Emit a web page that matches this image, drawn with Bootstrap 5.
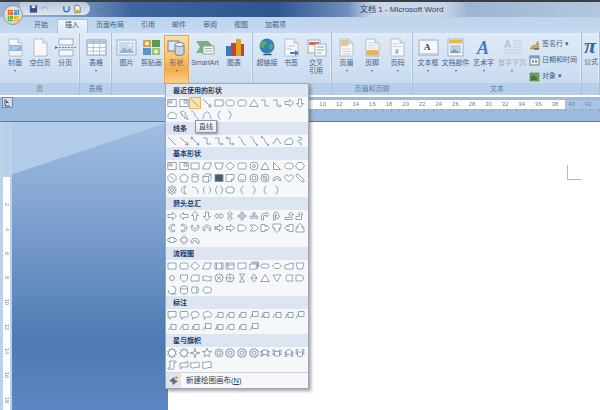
<!DOCTYPE html>
<html lang="zh-CN">
<head>
<meta charset="UTF-8">
<meta name="viewport" content="width=device-width, initial-scale=1.0">
<link href="https://cdn.jsdelivr.net/npm/bootstrap@5.3.3/dist/css/bootstrap.min.css" rel="stylesheet">
<script src="https://cdn.jsdelivr.net/npm/bootstrap@5.3.3/dist/js/bootstrap.bundle.min.js"></script>
<title>文档 1 - Microsoft Word</title>
<style>
  html, body { margin: 0; height: 410px; overflow: hidden; }
  body { font-family: "Liberation Sans", "Noto Sans CJK SC", sans-serif; font-size: 7px; line-height: 1.2; color: #46607f; background: #fff; }
  .word-app { position: relative; width: 600px; height: 410px; overflow: hidden; filter: blur(.35px); }

  .title-bar { height: 17px; border-top: 2px solid #3b3d42; background: linear-gradient(90deg, #9db8d8 0, #7d9cc5 12%, #3f659f 22%, #2f5590 46%, #6f90bc 58%, #c8d8ea 62%, #c6d6e8 74%, #9db5d2 78%, #b3c7de 100%); }
  .office-orb { position: absolute; left: 3px; top: 5px; width: 20px; height: 20px; border-radius: 50%; background: radial-gradient(circle at 50% 35%, #f7f2e2 0, #e3d9c0 60%, #b9c5d4 100%); border: 1px solid #8d9db2; }
  .qat { margin-left: 20px; height: 13px; width: 70px; padding-left: 8.5px; gap: 2px; background: linear-gradient(#b6c7dc, #dde6f0); border-radius: 0 8px 8px 0; }
  .qat-item { width: 9px; height: 10px; flex: none; }
  .doc-title { left: 360px; top: 5px; font-size: 8px; color: #33445c; white-space: nowrap; }

  .tab-row { height: 16px; padding-left: 25.5px; background: linear-gradient(#bdd3ec, #c6daf0); }
  .tab-item { height: 14px; padding: 2px 8.5px 0; color: #3f5f88; white-space: nowrap; }
  .tab-item.is-on { background: linear-gradient(#f0f6fc, #dbe8f6); border: 1px solid #a6bfdc; border-bottom: 0; border-radius: 2px 2px 0 0; padding: 1px 7.5px 0; color: #2f4562; }

  .ribbon { height: 62px; background: #d3e2f3; }
  .rb-group { height: 62px; border-right: 1px solid #a9c0db; box-shadow: inset -1px 0 0 #e4eef9; background: linear-gradient(#e0ebf7, #cfdff2 60%, #c2d6ed); }
  .rb-body { height: 50px; padding: 2px 2px 0; }
  .rb-label { height: 12px; line-height: 12px; text-align: center; color: #5f80ab; background: #b8cfe9; }
  .rb-btn { flex: none; padding-top: 3px; height: 49px; white-space: nowrap; }
  .rb-btn svg { width: 21px; height: 19px; display: block; margin-bottom: 2px; }
  .rb-btn.is-hot { background: linear-gradient(#fbe3a4, #f8c56c 45%, #f5a94a 70%, #fbd58a); box-shadow: inset 0 0 0 1px #dfa95a; }
  .rb-btn.is-off { color: #a0aebf; }
  .rb-drop { width: 0; height: 0; border: 1.5px solid transparent; border-top: 2px solid #4b6485; margin-top: 3px; }
  .rb-stack { padding: 4px 0 0 2px; gap: 5px; white-space: nowrap; }
  .rb-stack svg { width: 11px; height: 11px; margin-right: 2px; }
  .rb-stack > div { height: 11px; }
  .pi-glyph { font-family: "Liberation Serif", serif; font-size: 22px; font-weight: 700; font-style: italic; color: #2a69b0; line-height: 25px; height: 25px; margin-top: -5px; }

  .ruler-strip { height: 25px; background: #9dbbdf; border-bottom: 1px solid #66768c; }
  .corner-btn { width: 11px; height: 11px; margin: 2px 0 0 2px; background: #cfdef0; border: 1px solid #6d8cb3; }
  .corner-btn svg { display: block; width: 9px; height: 9px; }
  .h-ruler { position: absolute; left: 168px; right: 0; top: 100px; height: 9px; padding-left: 80px; display: flex; overflow: hidden; background: linear-gradient(90deg, #fff 0, #fff 397px, #a9c3e3 397px); color: #6d7f96; font-size: 6px; line-height: 9px; }
  .h-ruler span { flex: none; width: 16.6px; text-align: center; }
  .h-ticks { position: absolute; left: 168px; right: 0; top: 109px; height: 2px; background: repeating-linear-gradient(90deg, transparent 0, transparent 7.3px, #6d7f96 7.3px, #6d7f96 8.3px); opacity: .5; }

  .workspace { height: 290px; }
  .v-ruler { width: 12px; background: #bcd2ea; padding-left: 3px; }
  .v-scale { width: 7px; height: 290px; background: linear-gradient(#b9cfe8 0, #b9cfe8 55px, #fff 55px); color: #6d7f96; font-size: 5.5px; padding-top: 70.5px; overflow: hidden; }
  .v-scale span { display: block; height: 24.4px; text-align: center; line-height: 7px; writing-mode: vertical-rl; }
  .desk { width: 156px; background: linear-gradient(to bottom right, #b3cbea 50%, transparent 50.5%) top / 100% 52px no-repeat, linear-gradient(#a3bee2 0, #88a9d4 24%, #4e7ab2 76%, #5c88c3 100%); }
  .paper { flex: 1; background: #fff; padding: 43px 0 0 399px; }
  .crop-mark { width: 15px; height: 15px; border-left: 1px solid #b9b9b9; border-bottom: 1px solid #b9b9b9; }

  .shape-menu { position: absolute; left: 165px; top: 83px; width: 144px; height: 306px; background: #f6f7f9; border: 1px solid #a3a8ae; box-shadow: 2px 2px 3px rgba(40, 50, 70, .45); }
  .menu-band { height: 13px; line-height: 13px; padding-left: 7px; background: #dde6f0; font-weight: 700; color: #1f3a6b; }
  .menu-grid { display: flex; flex-wrap: wrap; padding-bottom: .7px; }
  .shape-cell { width: 11.7px; height: 12px; display: flex; align-items: center; justify-content: center; }
  .shape-cell svg { width: 10px; height: 10px; }
  .shape-cell.is-hot { background: #fbe5a2; box-shadow: inset 0 0 0 1px #e3b765; }
  .menu-foot { height: 16px; border-top: 1px solid #cfd5dc; background: #f6f7f9; color: #2b3a50; }
  .menu-foot-ico { width: 15px; height: 15px; background: #dfe4ea; }
  .menu-foot-ico svg { width: 11px; height: 11px; }
  .menu-foot-txt { padding-left: 5px; font-size: 7.5px; }
  .tip-box { position: absolute; left: 195px; top: 120px; width: 22px; height: 13px; line-height: 11px; text-align: center; background: linear-gradient(#f9fafc, #dfe4ec); border: 1px solid #8f97a2; color: #3b4a5e; box-shadow: 1px 1px 2px rgba(0, 0, 0, .35); }
</style>
</head>
<body>
<div class="word-app">
  <div class="title-bar d-flex align-items-start">
    <div class="qat d-flex align-items-center" id="qat"></div>
  </div>
  <div class="doc-title position-absolute">文档 1 - Microsoft Word</div>

  <div class="tab-row d-flex align-items-end" id="tabs"></div>
  <div class="ribbon d-flex" id="ribbon"></div>

  <div class="ruler-strip">
    <div class="corner-btn">
      <svg viewBox="0 0 9 9"><path d="M2 1v7h5" fill="none" stroke="#3f5068"/><path d="M3 2l3 3H3z" fill="#3f5068"/></svg>
    </div>
  </div>

  <div class="workspace d-flex">
    <div class="v-ruler"><div class="v-scale" id="vscale"></div></div>
    <div class="desk"></div>
    <div class="paper"><div class="crop-mark"></div></div>
  </div>

  <div class="h-ruler" id="hruler"></div>
  <div class="h-ticks"></div>

  <div class="office-orb d-flex align-items-center justify-content-center">
    <svg width="13" height="13" viewBox="0 0 15 15">
      <rect x="1" y="1" width="6" height="6" fill="#e2672c"/><rect x="8" y="1" width="6" height="6" fill="#4f8fd0"/>
      <rect x="1" y="8" width="6" height="6" fill="#6fae3d"/><rect x="8" y="8" width="6" height="6" fill="#e8b32f"/>
      <path d="M3 3h9v9H3z" fill="none" stroke="#fff" stroke-width=".8" opacity=".7"/>
    </svg>
  </div>

  <div class="shape-menu d-flex flex-column" id="menu"></div>
  <div class="tip-box">直线</div>
</div>

<script>
  // ---- title bar / tabs / rulers
  const qatIcons = [
    '<rect x="1" y="1" width="8" height="8" fill="#3a4f86"/><rect x="3" y="1" width="4" height="3" fill="#dfe6f2"/>',
    '<path d="M2 6a3 3 0 0 1 6-1" fill="none" stroke="#a9b4c2" stroke-width="1.5"/>',
    '',
    '<path d="M2 2v3a3 3 0 0 0 6 0V2" fill="none" stroke="#3f79c4" stroke-width="1.6"/>',
    '<path d="M2 1h4l2 2v6H2z" fill="#f4f4ee" stroke="#777"/><path d="M3 6h4v3H3z" fill="#d9a441"/>',
    '',
    '<path d="M3 4h5L5.5 7z" fill="#66788f"/>'
  ];
  document.getElementById("qat").innerHTML = qatIcons
    .map((p) => `<svg class="qat-item" viewBox="0 0 10 10">${p}</svg>`).join("");

  document.getElementById("tabs").innerHTML = ["开始", "插入", "页面布局", "引用", "邮件", "审阅", "视图", "加载项"]
    .map((t) => `<div class="tab-item${t === "插入" ? " is-on" : ""}">${t}</div>`).join("");

  let hr = "";
  for (let n = 2; n <= 42; n += 2) hr += `<span>${n}</span>`;
  document.getElementById("hruler").innerHTML = hr;

  let vr = "";
  for (let n = 2; n <= 18; n += 2) vr += `<span>${n}</span>`;
  document.getElementById("vscale").innerHTML = vr;

  // ---- ribbon icons, viewBox 21x19
  const page = (inner) => `<path d="M4 1h9l4 4v13H4z" fill="#f7f8fb" stroke="#a3b1c3" stroke-width=".8"/><path d="M13 1v4h4" fill="#dfe5ee" stroke="#a3b1c3" stroke-width=".8"/>${inner || ""}`;
  const I = {
    cover: page('<rect x="4.5" y="7" width="12" height="6" fill="#8fb2da"/><path d="M6 9h8M6 11h6M6 15h9" stroke="#dbe7f5" stroke-width=".8"/>'),
    blank: page(),
    brk: '<rect x="4" y="1" width="14" height="6" fill="#f6f7fa" stroke="#9dacbe"/><rect x="4" y="12" width="14" height="6" fill="#f6f7fa" stroke="#9dacbe"/><path d="M1 9.5h20" stroke="#6f86a6" stroke-dasharray="2 1"/><path d="M0 8l3 1.5L0 11z" fill="#3f6fae"/>',
    table: '<rect x="1" y="2" width="19" height="15" fill="#fbfcfe" stroke="#8a9db5"/><rect x="1" y="2" width="19" height="4" fill="#b3c7de"/><path d="M7.3 2v15M13.6 2v15M1 9.5h19M1 13.2h19" stroke="#a5b7cc" stroke-width=".8"/>',
    pic: '<rect x="1" y="2" width="19" height="15" fill="#eef3f9" stroke="#9bacc2"/><rect x="3" y="4" width="15" height="11" fill="#c6dcf0"/><path d="M3 15l5-6 3 3 3-2 4 5z" fill="#9ab2cc"/><circle cx="14" cy="7" r="1.5" fill="#f7f3d6"/>',
    clip: '<rect x="2" y="2" width="8" height="7" fill="#d2a04a"/><rect x="11" y="2" width="8" height="7" fill="#5b9a57"/><rect x="2" y="10" width="8" height="7" fill="#5c93c8"/><rect x="11" y="10" width="8" height="7" fill="#9cc46a"/><circle cx="6" cy="5.5" r="2" fill="#f3efe0"/><circle cx="15" cy="13.5" r="2" fill="#f3efe0"/>',
    shp: '<rect x="2" y="3" width="11" height="10" fill="#dfe8f2" stroke="#6f8299"/><path d="M9 6.5v9a4.5 2 0 0 0 9 0v-9" fill="#c6d4e3" stroke="#6f8299"/><ellipse cx="13.5" cy="6.5" rx="4.5" ry="2" fill="#f1f5f9" stroke="#6f8299"/>',
    art: '<path d="M1 3h12l6 6-6 6H1l4-6z" fill="#7ab07d"/><rect x="8" y="8" width="11" height="8" fill="#f4f6f1" stroke="#8fa892"/><path d="M10 10.5h7M10 13h7" stroke="#9ab39d"/>',
    chart: '<rect x="2" y="8" width="5" height="10" fill="#3f78bd"/><rect x="7" y="5" width="5" height="13" fill="#c8432f"/><rect x="12" y="1" width="5" height="17" fill="#e0a12f"/><rect x="17" y="6" width="3" height="12" fill="#c8432f"/>',
    link: '<circle cx="10" cy="8" r="7.5" fill="#2f7fc4"/><path d="M4 4c3-2 6-1 6 1s-3 2-3 4-3 1-4-1zM12 6c3-1 5 0 4 3s-3 3-4 1z" fill="#63a94b"/><path d="M7 16.5h3M11 16.5h3" stroke="#44505f" stroke-width="1.6" stroke-linecap="round"/>',
    mark: page('<path d="M6 8h8M6 11h5" stroke="#a5b3c4" stroke-width=".8"/><path d="M9 14h5v-2l4 3-4 3v-2H9z" fill="#3f7fc4"/>'),
    xref: '<rect x="2" y="2" width="12" height="13" fill="#f6f6f4" stroke="#9dacbe"/><rect x="3" y="4" width="10" height="3" fill="#cf6a5a"/><rect x="9" y="6" width="11" height="12" fill="#fbfbf8" stroke="#9dacbe"/><path d="M11 9h7M11 12h7M11 15h5" stroke="#8c98a7" stroke-width=".9"/>',
    head: page('<rect x="4.5" y="2" width="8" height="6" fill="#dcc69a"/><path d="M6 11h9M6 13.5h9M6 16h9" stroke="#c3ccd7" stroke-width=".8"/>'),
    foot: page('<path d="M6 5h6M6 7.5h9M6 10h9" stroke="#c3ccd7" stroke-width=".8"/><rect x="4.5" y="12" width="12" height="5.5" fill="#e6b35a"/>'),
    num: page('<path d="M6 6h6M6 8.5h9" stroke="#c3ccd7" stroke-width=".8"/><text x="8" y="16" font-family="Liberation Sans" font-size="6.5" font-weight="700" fill="#7a899c">#</text>'),
    tbox: '<rect x="1" y="2" width="19" height="15" fill="#f4f7fb" stroke="#9dacbe"/><rect x="2" y="15" width="17" height="2" fill="#c6d2e0"/><text x="6" y="12" font-family="Liberation Serif" font-size="9" font-weight="700" fill="#3a404c">A</text>',
    part: '<rect x="3" y="1" width="15" height="17" fill="#f6f7f4" stroke="#a3b1c3"/><rect x="4" y="2" width="13" height="3.5" fill="#e6b94f"/><rect x="5" y="7" width="11" height="8" fill="#b7cfe3"/><path d="M5 15l4-4 3 2 4 2z" fill="#7f9ab4"/>',
    wart: '<text x="4" y="16" font-family="Liberation Serif" font-size="18" font-weight="700" font-style="italic" fill="#3f7bc4">A</text>',
    cap: '<text x="2" y="10" font-family="Liberation Sans" font-size="10" font-weight="700" fill="#b7c2d0">A</text><path d="M11 3h9M11 6h9M11 9h9M2 12h18M2 15h18" stroke="#c3ccd7"/>',
    sign: '<path d="M1 10l3-4 2 1 3-5 1 8z" fill="#c9a85b" stroke="#8c7a55" stroke-width=".5"/><path d="M5 10h5" stroke="#445"/>',
    date: '<rect x="1" y="1" width="9" height="9" fill="#f4f6fa" stroke="#5f7694"/><rect x="1" y="1" width="9" height="2.5" fill="#7f9cc2"/><path d="M4 5v3M7 5v3" stroke="#33435a"/>',
    obj: '<rect x="1" y="2" width="9" height="8" fill="#6fa35f" stroke="#51784a" stroke-width=".6"/><path d="M3 9V5M5 9V4M7 9V6" stroke="#22401f"/>'
  };

  // label, width, icon; lines split two-row labels; d = drop arrow
  const groups = [
    { name: "页", w: 80, items: [["封面", 26, "cover", 1], ["空白页", 24, "blank"], ["分页", 26, "brk"]] },
    { name: "表格", w: 32, items: [["表格", 28, "table", 1]] },
    { name: "", w: 141, items: [["图片", 25, "pic"], ["剪贴画", 25, "clip"], ["形状", 25, "shp", 1, "hot"], ["SmartArt", 32, "art"], ["图表", 26, "chart"]] },
    { name: "链接", w: 79, items: [["超链接", 24, "link"], ["书签", 24, "mark"], ["交叉<br>引用", 26, "xref"]] },
    { name: "页眉和页脚", w: 81, items: [["页眉", 25, "head", 1], ["页脚", 26, "foot", 1], ["页码", 25, "num", 1]] },
    { name: "文本", w: 169, items: [["文本框", 26, "tbox", 1], ["文档部件", 29, "part", 1], ["艺术字", 27, "wart", 1], ["首字下沉", 30, "cap", 1, "off"]], stack: [["签名行 ▾", "sign"], ["日期和时间", "date"], ["对象 ▾", "obj"]] },
    { name: "", w: 18, pi: true, items: [] }
  ];

  const ribbonHtml = groups.map((g) => {
    const btns = g.items.map(([label, w, icon, drop, state]) => `
      <div class="rb-btn d-flex flex-column align-items-center text-center${state ? " is-" + state : ""}" style="width:${w}px">
        <svg viewBox="0 0 21 19">${I[icon]}</svg>
        <div>${label}</div>
        ${drop ? '<div class="rb-drop"></div>' : ""}
      </div>`).join("");
    const stack = g.stack ? `<div class="rb-stack d-flex flex-column">${g.stack.map(([t, ic]) =>
      `<div class="d-flex align-items-center"><svg viewBox="0 0 11 11">${I[ic]}</svg>${t}</div>`).join("")}</div>` : "";
    const pi = g.pi ? `<div class="rb-btn d-flex flex-column" style="width:30px"><div class="pi-glyph">π</div><div>公式</div></div>` : "";
    return `<div class="rb-group flex-shrink-0" style="width:${g.w}px">
      <div class="rb-body d-flex">${btns}${stack}${pi}</div>
      <div class="rb-label">${g.name}</div>
    </div>`;
  }).join("");
  document.getElementById("ribbon").innerHTML = ribbonHtml;

  // ---- gallery shapes, viewBox 10x10
  const star = (n, R, r) => {
    let d = "";
    for (let i = 0; i < n * 2; i++) {
      const rad = i % 2 ? r : R, a = Math.PI * i / n - Math.PI / 2;
      d += (i ? "L" : "M") + (5 + rad * Math.cos(a)).toFixed(2) + " " + (5 + rad * Math.sin(a)).toFixed(2);
    }
    return d + "z";
  };
  const S = {
    tb: "M.8 1.5h8.4v7H.8zM2 3h3v2H2z", tb2: "M.8 1.5h8.4v7H.8zM5 2.6h3v2.5H5z",
    line: "M1 1L9 9", arrow: "M1 1L9 9M9 9L8.5 6M9 9L6 8.5", dbl: "M1 1L9 9M9 9L8.5 6.5M9 9L6.5 8.5M1 1L1.5 3.5M1 1L3.5 1.5",
    rect: "M1 2h8v6H1z", rrect: "M2.5 2h5A1.5 1.5 0 0 1 9 3.5v3A1.5 1.5 0 0 1 7.5 8h-5A1.5 1.5 0 0 1 1 6.5v-3A1.5 1.5 0 0 1 2.5 2z",
    oval: "M.8 5a4.2 3 0 1 0 8.4 0a4.2 3 0 1 0-8.4 0z", circ: "M1 5a4 4 0 1 0 8 0a4 4 0 1 0-8 0z", small: "M2.5 5a2.5 2.5 0 1 0 5 0a2.5 2.5 0 1 0-5 0z",
    dotc: "M1 5a4 4 0 1 0 8 0a4 4 0 1 0-8 0zM3.5 5a1.5 1.5 0 1 0 3 0a1.5 1.5 0 1 0-3 0z",
    tri: "M5 1.5L9.2 8.5H.8z", rtri: "M1.5 1.5V8.5H8.5z", para: "M3 2h6.5L7 8H.5z", trap: "M.8 2h8.4L7.5 8h-5z", dia: "M5 1L9.5 5 5 9 .5 5z",
    pent: "M5 1l4.3 3.2L7.6 9H2.4L.7 4.2z", hex: "M3 1.5h4L9.5 5 7 8.5H3L.5 5z", oct: "M3.2 1h3.6L9 3.2v3.6L6.8 9H3.2L1 6.8V3.2z",
    elbow: "M1 2H5V8H9", elbowa: "M1 2H5V8H9M9 8L7.5 6.8M9 8L7.5 9.2", elbowd: "M1 2H5V8H9M9 8L7.5 6.8M9 8L7.5 9.2M1 2L2.5.8M1 2L2.5 3.2",
    curve: "M1 1C6 1 4 9 9 9", curvea: "M1 1C6 1 4 9 9 9M9 9L7.3 7.8M9 9L7.3 9.8", curved: "M1 1C6 1 4 9 9 9M9 9L7.3 7.8M9 9L7.3 9.8M1 1L2.7 .2M1 1L2.7 2.2",
    peak: "M1 8L5 2 9 8", arcu: "M1 9C2 4 3 2 5 2S8 4 9 9", scrib: "M3 1C8 1 8 4 5 4S2 6 5 7 7 9 5 9",
    cloud: "M2.5 8.5A2 2 0 0 1 1.5 5 2 2 0 0 1 4 3 2.3 2.3 0 0 1 8 4 2.2 2.2 0 0 1 8 8.5z", cloudf: "M1 8.5L1 5 4 3 7 2 9 5 8 8.5z",
    bolt: "M4 .8L7 3.5 5.8 4.3 8.5 7 7.5 7.5 9.3 9.5 5 7.8 6 7 2.5 5 3.5 4.3 1 2.5z",
    lbrace: "M6.5 1C4.5 1 5 4.5 3.5 5 5 5.5 4.5 9 6.5 9", rbrace: "M3.5 1C5.5 1 5 4.5 6.5 5 5 5.5 5.5 9 3.5 9",
    lbrack: "M6.5 1C4.5 2 4 3.5 4 5s.5 3 2.5 4", rbrack: "M3.5 1C5.5 2 6 3.5 6 5s-.5 3-2.5 4",
    dec: "M3.5 1h3L9 3.5v3L6.5 9h-3L1 6.5v-3zM3 3l4 4", can: "M2 2.5v5a3 1.5 0 0 0 6 0v-5M2 2.5a3 1.5 0 0 0 6 0a3 1.5 0 0 0-6 0z",
    cube: "M1 3.5h5.5V9H1zM1 3.5L3.5 1H9L6.5 3.5M9 1v5.5L6.5 9", bevel: "M1 1.5h8v7H1z", fold: "M1 1.5h8V6L6.5 8.5H1zM6.5 8.5V6H9",
    smile: "M1 5a4 4 0 1 0 8 0a4 4 0 1 0-8 0zM3.5 3.8v.4M6.5 3.8v.4M3 6.2c1 1.2 3 1.2 4 0", donut: "M1 5a4 4 0 1 0 8 0a4 4 0 1 0-8 0zM3 5a2 2 0 1 0 4 0a2 2 0 1 0-4 0z",
    nosym: "M1 5a4 4 0 1 0 8 0a4 4 0 1 0-8 0zM3 5a2 2 0 1 0 4 0a2 2 0 1 0-4 0zM2.2 2.2L7.8 7.8", barc: "M1 7.5a4 4 0 0 1 8 0H7a2 2 0 0 0-4 0z",
    heart: "M5 8.8C1 6 .5 4.5 1 3S4 1.5 5 3.5C6 1.5 8.5 1.5 9 3S9 6 5 8.8z", pen: "M1.5 1.5L3 1 9 7 8.8 9 7 8.8 1 3z",
    sun: star(8, 4.5, 2.8) + "M3.5 5a1.5 1.5 0 1 0 3 0a1.5 1.5 0 1 0-3 0z", moon: "M7 1C3.5 1.5 2.5 3.5 2.5 5s1 3.5 4.5 4C5.5 7.5 5 6.3 5 5s.5-2.5 2-4z",
    arc: "M2 2C6 2 8 4.5 8 8.5", dbrack: "M3 1.5C1 3 1 7 3 8.5M7 1.5C9 3 9 7 7 8.5", dbrace: "M3.5 1C2 1 2.5 4.5 1 5 2.5 5.5 2 9 3.5 9M6.5 1C8 1 7.5 4.5 9 5 7.5 5.5 8 9 6.5 9",
    plaq: "M2.5 2h5A1.5 1.5 0 0 0 9 3.5v3A1.5 1.5 0 0 0 7.5 8h-5A1.5 1.5 0 0 0 1 6.5v-3A1.5 1.5 0 0 0 2.5 2z",
    rarrow: "M1 3.5H5.5V1.5L9.5 5 5.5 8.5V6.5H1z", larrow: "M9 3.5H4.5V1.5L.5 5 4.5 8.5V6.5H9z", uarrow: "M3.5 9V4.5H1.5L5 .5 8.5 4.5H6.5V9z", darr: "M3.5 1V5.5H1.5L5 9.5 8.5 5.5H6.5V1z",
    lr: "M.5 5L3 2.5V4H7V2.5L9.5 5 7 7.5V6H3V7.5z", ud: "M5 .5L7.5 3H6V7H7.5L5 9.5 2.5 7H4V3H2.5z",
    quad: "M5 .5L6.5 2.5H5.7V4.3H7.5V3.5L9.5 5 7.5 6.5V5.7H5.7V7.5H6.5L5 9.5 3.5 7.5H4.3V5.7H2.5V6.5L.5 5 2.5 3.5V4.3H4.3V2.5H3.5z",
    lru: "M5 1L6.5 3H5.7V5.5H7.5V4.5L9.5 6.2 7.5 8V7H2.5V8L.5 6.2 2.5 4.5V5.5H4.3V3H3.5z",
    bent: "M1.5 9V4.5A2 2 0 0 1 3.5 2.5H6.5V1L9 3.5 6.5 6V4.5H3.5V9z", uturn: "M1.5 9V3.5A2.5 2.5 0 0 1 6.5 3.5V5H8L5.5 8 3 5H4.5V3.5A1 1 0 0 0 3.3 3.5V9z",
    corner: "M1 6.5H6V3.5H4.5L7 1 9.5 3.5H8V8.5H1z", bentup: "M1 5.5H4.5V3.5H3L5.5 1 8 3.5H6.5V8.5H1z",
    curl: "M7 1C4 1 2 3 2 5S4 9 7 9L8 7.5C6 7.5 4 7 4 5S6 2.5 8 2.5z", curu: "M1 3C1 6 3 8 5 8S9 6 9 3L7.5 2C7.5 4 7 6 5 6S2.5 4 2.5 2z", curd: "M1 7C1 4 3 2 5 2S9 4 9 7L7.5 8C7.5 6 7 4 5 4S2.5 6 2.5 8z",
    stripe: "M1 3.5h1v3H1zM3 3.5h2.5V1.5L9.5 5 5.5 8.5V6.5H3z", notch: "M1 3.5H5.5V1.5L9.5 5 5.5 8.5V6.5H1L2.5 5z", pentag: "M1 2H6.5L9.5 5 6.5 8H1z", chev: "M1 2H6L9.5 5 6 8H1L4 5z",
    rcall: "M1 1.5H5V3.5H6.5V2L9.5 5 6.5 8V6.5H5V8.5H1z", dcall: "M1 1H9V5H7V6.5H8.2L5 9.5 1.8 6.5H3V5H1z", lcall: "M9 1.5H5V3.5H3.5V2L.5 5 3.5 8V6.5H5V8.5H9z", ucall: "M1 9H9V5H7V3.5H8.2L5 .5 1.8 3.5H3V5H1z",
    lrcall: "M3 2.5H7V4H8V3L9.8 5 8 7V6H7V7.5H3V6H2V7L.2 5 2 3V4H3z", quadc: "M3 3H4V2H3.5L5 .5 6.5 2H6V3H7V4H8V3.5L9.5 5 8 6.5V6H7V7H6V8H6.5L5 9.5 3.5 8H4V7H3V6H2V6.5L.5 5 2 3.5V4H3z", circa: "M1 8A4 4 0 0 1 9 7H9.8L8 9 6 7H7A2 2 0 0 0 3 8z",
    pred: "M1 2h8v6H1zM2.5 2v6M7.5 2v6", intern: "M1 2h8v6H1zM3 2v6M1 4h8", doc: "M1 2h8v5.5C6.5 6 4 9.5 1 7.5z", mdoc: "M3 1h6.5v5M2 2h6.5v5.5M.8 3h6.5v5C5 7 3 9.5.8 8z",
    term: "M3 3h4a2 2 0 0 1 0 4H3a2 2 0 0 1 0-4z", prep: "M3 2.5h4L9.5 5 7 7.5H3L.5 5z", mani: "M1 4L9 2V8H1z", mano: "M1 2H9L7.5 8H2.5z",
    offp: "M1.5 2h7v4L5 8.8 1.5 6z", card: "M3 2h6v6H1V4z", tape: "M1 3c2 1.5 3.5-1 4 0s3 1.5 4 0v5C7 6.5 5.5 9 5 8S2 6.5 1 8z",
    sumj: "M1 5a4 4 0 1 0 8 0a4 4 0 1 0-8 0zM2.2 2.2L7.8 7.8M7.8 2.2L2.2 7.8", orj: "M1 5a4 4 0 1 0 8 0a4 4 0 1 0-8 0zM5 1v8M1 5h8",
    coll: "M2.5 1h5L2.5 9h5z", sort: "M5 1L8 5 5 9 2 5zM2 5h6", merg: "M1 2h8L5 8.5z", stor: "M3 2H9C7.8 3.5 7.8 6.5 9 8H3C1.8 6.5 1.8 3.5 3 2z", delay: "M1 2H5.5a3 3 0 0 1 0 6H1z", disp: "M3 2H6.5a3 3 0 0 1 0 6H3L.8 5z",
    seq: "M1 5a4 4 0 1 0 4-4M5 9H9.5", mag: "M1.5 2.5v5a3.5 1.5 0 0 0 7 0v-5M1.5 2.5a3.5 1.5 0 0 0 7 0a3.5 1.5 0 0 0-7 0z", direct: "M2.5 2h5C8.8 3.5 8.8 6.5 7.5 8h-5C1.2 6.5 1.2 3.5 2.5 2zM7.5 2C6.2 3.5 6.2 6.5 7.5 8",
    c1: "M1 1.5h8V7H4.5L2.5 9.3 3 7H1z", c2: "M2 1.5h6a1 1 0 0 1 1 1V6a1 1 0 0 1-1 1H4.5L2.8 9.3 3 7H2a1 1 0 0 1-1-1V2.5a1 1 0 0 1 1-1z",
    c3: "M1 4.5a4 3 0 0 1 8 0a4 3 0 0 1-5 3L2.5 9.3 2.8 7A4 3 0 0 1 1 4.5z", c4: "M2 7A2 2 0 0 1 1.5 4 2 2 0 0 1 4 2 2.3 2.3 0 0 1 8 3 2 2 0 0 1 8 7H4.5L2 9.3 3 7z",
    l1: "M4 2.5h5v5H4zM4 5L1 8", l2: "M4 2.5h5v5H4zM4 4.5H2.5L1 8", l3: "M4 2.5h5v5H4zM4 4.5H2.5V7L1 8", l4: "M3.5 1.5h5.5v5H3.5zM1 8.5L3.5 4", l5: "M4 2.5h5v5H4zM3 2.5v5M3 5L1 8",
    e1: star(10, 4.8, 3), e2: star(8, 4.8, 2.8), s4: star(4, 4.8, 1.4), s5: star(5, 4.8, 2), s8: star(8, 4.5, 3.2) + "M3 5a2 2 0 1 0 4 0a2 2 0 1 0-4 0z", s16: star(16, 4.6, 3.6) + "M3 5a2 2 0 1 0 4 0a2 2 0 1 0-4 0z",
    rib1: "M2.5 2h5v4.5h-5zM2.5 3.5H.5L1.5 5.5 .5 8H3V6.5M7.5 3.5H9.5L8.5 5.5 9.5 8H7V6.5", rib2: "M2.5 3.5h5V8h-5zM2.5 6.5H.5L1.5 4.5 .5 2H3V3.5M7.5 6.5H9.5L8.5 4.5 9.5 2H7V3.5",
    crib1: "M2.5 2.5C4 1.5 6 1.5 7.5 2.5V7C6 6 4 6 2.5 7zM2.5 4H.8L1.5 6 1 8.5 3.5 8M7.5 4H9.2L8.5 6 9 8.5 6.5 8", crib2: "M2.5 3.5C4 4.5 6 4.5 7.5 3.5V8C6 9 4 9 2.5 8zM2.5 6H.8L1.5 4 1 1.5 3.5 2M7.5 6H9.2L8.5 4 9 1.5 6.5 2",
    vscr: "M3 1h5.5c1 0 1 1.5 0 1.5H7V8c0 1-1 1.2-1.5 1.2H1.5C.5 9.2.5 7.8 1.5 7.8H3zM3 1c-.8 0-.8 1 0 1.2", hscr: "M1 3V8c0 1.2 1.5 1.2 1.5 0V7H9V2c0-1-1.5-1-1.5 0v1z",
    wave: "M.8 2.5c2.5 1.8 5.5-1.5 8.4 0v5c-3-1.5-6 1.8-8.4 0z", dwave: "M.8 2c2.5 2 5.5-2 8.4 0v6c-3-2-6 2-8.4 0z"
  };
  const darkFill = { bevel: "#4a5b73" };

  const sections = [
    ["最近使用的形状", "tb tb2 line arrow rect oval rrect tri elbow elbowa rarrow darr cloud bolt curve arcu lbrace rbrace"],
    ["线条", "line arrow dbl elbow elbowa elbowd curve curvea curved peak cloudf scrib"],
    ["基本形状", "tb tb2 rect para trap dia rrect dotc tri rtri oval hex dec pent can cube bevel fold smile donut nosym barc heart pen sun moon arc dbrack dbrace plaq lbrack rbrack lbrace rbrace"],
    ["箭头总汇", "rarrow larrow uarrow darr lr ud quad lru bent uturn corner bentup curl -curl curu curd stripe notch pentag chev rcall dcall lcall ucall lrcall quadc circa"],
    ["流程图", "rect rrect dia para pred intern doc mdoc term prep mani mano small offp card tape sumj orj coll sort tri merg stor delay seq mag direct disp"],
    ["标注", "c1 c2 c3 c4 l1 l2 l3 l4 l5 l2 l3 l4 l1 l2 l3 l4 l5 l2 l3 l4"],
    ["星与旗帜", "e1 e2 s4 s5 s8 s16 s16 s16 rib1 rib2 crib1 crib2 vscr hscr wave dwave"]
  ];

  const openShape = /^(line|arrow|dbl|elbow|curve|peak|arc|scrib|lbrace|rbrace|lbrack|rbrack|dbrack|dbrace)/;
  const shapeSvg = (key) => {
    const flip = key[0] === "-";
    const k = flip ? key.slice(1) : key;
    return `<svg viewBox="0 0 10 10"><path d="${S[k]}" ${flip ? 'transform="matrix(-1 0 0 1 10 0)"' : ""} fill="${darkFill[k] || "#fff"}" fill-opacity="${openShape.test(k) ? 0 : 1}" stroke="#7c8da2" stroke-width=".8"/></svg>`;
  };

  let menuHtml = "";
  sections.forEach(([title, list], s) => {
    const cells = list.split(" ").map((k, i) =>
      `<div class="shape-cell${s === 0 && i === 2 ? " is-hot" : ""}">${shapeSvg(k)}</div>`).join("");
    menuHtml += `<div class="menu-band">${title}</div><div class="menu-grid">${cells}</div>`;
  });
  menuHtml += `<div class="menu-foot d-flex align-items-center mt-auto">
    <div class="menu-foot-ico d-flex align-items-center justify-content-center">
      <svg viewBox="0 0 11 11"><path d="M1 6l5-4 1 3 3 1-5 4-1-3z" fill="#5f6f85"/><circle cx="8.5" cy="2.5" r="1.5" fill="#e0a83a"/></svg>
    </div>
    <div class="menu-foot-txt">新建绘图画布(<u>N</u>)</div>
  </div>`;
  document.getElementById("menu").innerHTML = menuHtml;
</script>
</body>
</html>
